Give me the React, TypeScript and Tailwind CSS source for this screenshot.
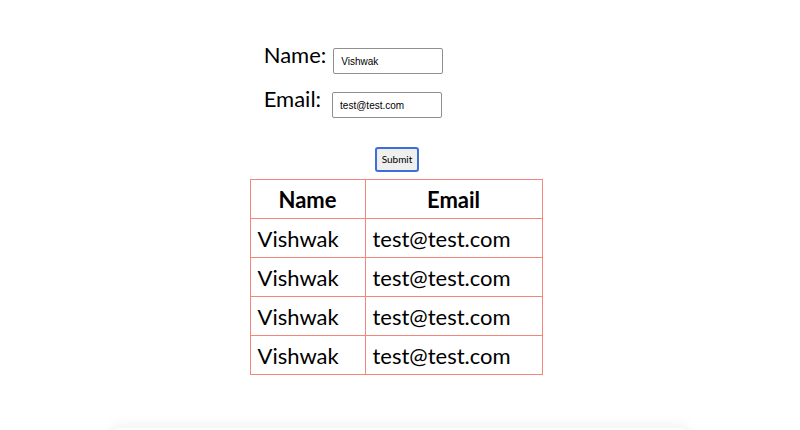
const ROWS = [
  { name: "Vishwak", email: "test@test.com" },
  { name: "Vishwak", email: "test@test.com" },
  { name: "Vishwak", email: "test@test.com" },
  { name: "Vishwak", email: "test@test.com" },
];

const label = "-mt-[4px] text-[22px] leading-none text-black";
const input =
  "h-[26px] w-[110px] rounded-[2px] border border-[#8f8f8f] px-[7px] font-['Liberation_Sans',sans-serif] text-[10px] text-black outline-none";
const cell = "border border-[#f4877c] px-[7px] h-[39px] text-[22px] text-black";

export default function App() {
  return (
    <div className="relative h-[430px] w-[800px] overflow-hidden bg-white font-['Lato',sans-serif]">
      <div className="flex flex-col items-center pt-[48px]">
        <div className="mr-[93px] flex flex-col gap-[18px]">
          <div className="flex items-start gap-[7px]">
            <span className={label}>Name:</span>
            <input defaultValue="Vishwak" className={input} />
          </div>
          <div className="flex items-start gap-[11px]">
            <span className={label}>Email:</span>
            <input defaultValue="test@test.com" className={input} />
          </div>
        </div>

        <button className="mt-[29px] mr-[6px] h-[25px] w-[44px] rounded-[3px] border-2 border-[#3d6fd6] bg-[#efefef] text-[10px] text-black">
          Submit
        </button>

        <table className="mt-[7px] ml-[-8px] border-collapse border border-[#f4877c]">
          <thead>
            <tr>
              <th className={`${cell} w-[115px] text-center font-bold`}>Name</th>
              <th className={`${cell} w-[177px] text-center font-bold`}>Email</th>
            </tr>
          </thead>
          <tbody>
            {ROWS.map((row, i) => (
              <tr key={i}>
                <td className={`${cell} text-left`}>{row.name}</td>
                <td className={`${cell} text-left`}>{row.email}</td>
              </tr>
            ))}
          </tbody>
        </table>
      </div>

      {/* faint shadow of something below the fold */}
      <div className="absolute left-[110px] top-[428px] h-[20px] w-[580px] rounded-full shadow-[0_-4px_12px_rgba(0,0,0,0.05)]" />
    </div>
  );
}
